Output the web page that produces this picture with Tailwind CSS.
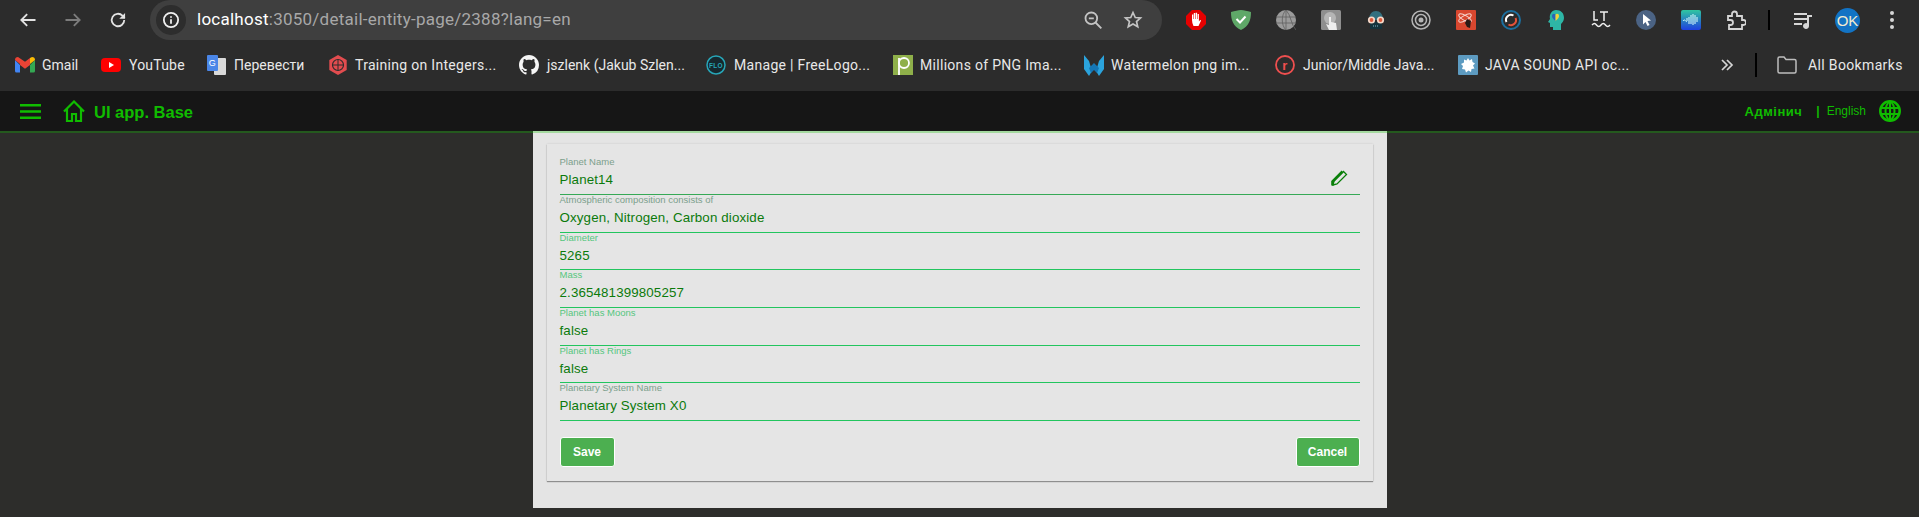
<!DOCTYPE html>
<html lang="en">

<head>
    <meta charset="UTF-8">
    <meta name="viewport" content="width=device-width, initial-scale=1.0">
    <title>Planet detail</title>
    <script src="https://cdn.jsdelivr.net/npm/@tailwindcss/browser@4"></script>
</head>

<body class="bg-[#2d2d2b] h-[517px] overflow-hidden font-['Liberation_Sans',sans-serif]">

    <!-- Browser toolbar -->
    <div class="bg-[#2c2c2c] h-[40px] flex items-center font-['Roboto',sans-serif]">
        <div class="flex w-[150px] pl-[5px]">
            <div class="w-[45px] flex justify-center">
                <svg class="w-[20px] h-[20px]" viewBox="0 0 24 24" fill="none" stroke="#e3e3e3" stroke-width="2.2"><path d="M21 12H4M11 5l-7 7 7 7" /></svg>
            </div>
            <div class="w-[45px] flex justify-center">
                <svg class="w-[20px] h-[20px]" viewBox="0 0 24 24" fill="none" stroke="#7c7c7c" stroke-width="2.2"><path d="M3 12h17M13 5l7 7-7 7" /></svg>
            </div>
            <div class="w-[45px] flex justify-center">
                <svg class="w-[20px] h-[20px]" viewBox="0 0 24 24" fill="none" stroke="#e3e3e3" stroke-width="2.2"><path d="M19.5 12a7.5 7.5 0 1 1-2.2-5.3L20 9.5" /><path d="M20.5 3.5v7h-7" fill="#e3e3e3" stroke="none" /></svg>
            </div>
        </div>
        <div class="w-[1012px] h-[40px] bg-[#3f3f3f] rounded-l-[20px] rounded-r-[20px] flex items-center relative -mt-px">
            <div class="w-[30px] h-[30px] ml-[6px] rounded-full bg-[#2d2d2d] flex items-center justify-center">
                <svg class="w-[18px] h-[18px]" viewBox="0 0 24 24" fill="none" stroke="#f0f0f0" stroke-width="2.4"><circle cx="12" cy="12" r="9.5" /><path d="M12 11v6M12 7v2" /></svg>
            </div>
            <div class="ml-[11px] text-[17px] text-[#a8a8a8] whitespace-nowrap tracking-[0.25px]"><span class="text-white">localhost</span>:3050/detail-entity-page/2388?lang=en</div>
            <div class="ml-auto flex items-center gap-[20px] pr-[19px]">
                <svg class="w-[20px] h-[20px]" viewBox="0 0 24 24" fill="none" stroke="#c4c4c4" stroke-width="2.2"><circle cx="10" cy="10" r="7" /><path d="M15 15l7 7M7 10h6" /></svg>
                <svg class="w-[20px] h-[20px]" viewBox="0 0 24 24" fill="none" stroke="#c4c4c4" stroke-width="2"><path d="M12 3l2.7 6 6.3.6-4.8 4.2 1.500 6.4L12 16.8l-5.7 3.4 1.500-6.4L3 9.6 9.3 9z" /></svg>
            </div>
        </div>
        <div class="flex ml-[11px]">
            <div class="w-[45px] flex justify-center">
                <svg class="w-[20px] h-[20px]" viewBox="0 0 20 20"><path d="M6 0h8l6 6v8l-6 6H6l-6-6V6z" fill="#e60000" /><path d="M6 8V4.5h1.3V9h.5V3h1.4v6h.5V2.8h1.4V9h.5V4h1.3v7.5l1.2-1.5 1 .6-2.6 5.4H7.5C6.500 14 6 12 6 10z" fill="#fff" /></svg>
            </div>
            <div class="w-[45px] flex justify-center">
                <svg class="w-[20px] h-[20px]" viewBox="0 0 20 20"><path d="M10 0c3 0 6 1 10 2 0 8-2 14-10 18C2 16 0 10 0 2c4-1 7-2 10-2z" fill="#5fa868" /><path d="M5.500 9l3.500 3.500 5.500-6" fill="none" stroke="#fff" stroke-width="2" /></svg>
            </div>
            <div class="w-[45px] flex justify-center">
                <svg class="w-[20px] h-[20px]" viewBox="0 0 20 20" fill="none"><circle cx="10" cy="10" r="10" fill="#9b9b9b" /><path d="M0 7h20M0 13h20M10 0v20M10 0C5 5 5 15 10 20M10 0c5 5 5 15 10 20" stroke="#5f5f5f" stroke-width=".8" /></svg>
            </div>
            <div class="w-[45px] flex justify-center">
                <svg class="w-[20px] h-[20px]" viewBox="0 0 20 20"><rect width="20" height="20" rx="1.500" fill="#8f8f8f" /><circle cx="9" cy="8" r="6" fill="#b5b5b5" /><path d="M8 7h2v5l5 1 1 7H8l-3-6 3 1z" fill="#eee" /></svg>
            </div>
            <div class="w-[45px] flex justify-center">
                <svg class="w-[20px] h-[20px]" viewBox="0 0 20 20"><path d="M3 10C3 4 6 1 10 1s7 3 7 9z" fill="#33707f" /><path d="M4 12h12v7H4z" fill="#14333c" /><path d="M7 16h6" stroke="#5f8f9c" stroke-width="1.500" stroke-dasharray="1 1" /><circle cx="5.500" cy="10" r="3.600" fill="#f5d9c9" /><circle cx="14.500" cy="10" r="3.600" fill="#f5d9c9" /><circle cx="5.500" cy="10" r="1.900" fill="#dc5a3c" /><circle cx="14.500" cy="10" r="1.900" fill="#dc5a3c" /></svg>
            </div>
            <div class="w-[45px] flex justify-center">
                <svg class="w-[20px] h-[20px]" viewBox="0 0 20 20" fill="none" stroke="#b5b5b5"><circle cx="10" cy="10" r="9" stroke-width="1.500" /><circle cx="10" cy="10" r="5.500" stroke-width="1.500" /><circle cx="10" cy="10" r="2.500" fill="#b5b5b5" stroke="none" /></svg>
            </div>
            <div class="w-[45px] flex justify-center">
                <svg class="w-[20px] h-[20px]" viewBox="0 0 20 20"><rect width="20" height="20" rx="1" fill="#d9472f" /><g fill="none" stroke="#f6d6cf" stroke-width="1"><ellipse cx="9" cy="8" rx="7" ry="2.500" transform="rotate(30 9 8)" /><ellipse cx="9" cy="8" rx="7" ry="2.500" transform="rotate(-30 9 8)" /></g><path d="M11 9l4 2-1 7-3-1-2-4z" fill="#2a1a16" /></svg>
            </div>
            <div class="w-[45px] flex justify-center">
                <svg class="w-[20px] h-[20px]" viewBox="0 0 20 20" fill="none"><circle cx="10" cy="10" r="9" stroke="#1c6f9f" stroke-width="2" /><path d="M5.500 12a5 5 0 0 1 7-6.500" stroke="#fff" stroke-width="2" /><path d="M14.500 8a5 5 0 0 1-7 6.500" stroke="#e5533b" stroke-width="2" /></svg>
            </div>
            <div class="w-[45px] flex justify-center">
                <svg class="w-[20px] h-[20px]" viewBox="0 0 20 20"><path d="M10 0c5 0 8 3 8 8 0 3-2 5-3 6v6H7v-3H4v-4l-2-1 2-3C3 4 6 0 10 0z" fill="#2eb6a6" /><path d="M9.500 11C7 9 6 7.500 6 6c0-2 2-3 3.500-1.500z" fill="#2d62b8" /><path d="M9.500 11c2.500-2 3.500-3.500 3.500-5 0-2-2-3-3.500-1.500z" fill="#f2d33d" /></svg>
            </div>
            <div class="w-[45px] flex justify-center">
                <svg class="w-[20px] h-[20px]" viewBox="0 0 20 20" fill="none" stroke="#f0f0f0" stroke-width="1.500"><path d="M3 1v9h4M9 2h8M13 2v9" /><path d="M1 15c2-2 3-2 4.500 0s3 2 4.500 0 3-2 4.500 0 3 2 4.500 0" /></svg>
            </div>
            <div class="w-[45px] flex justify-center">
                <svg class="w-[20px] h-[20px]" viewBox="0 0 20 20"><circle cx="10" cy="10" r="10" fill="#4b6384" /><path d="M7 4l8 6.500-3.500.5 2 4-2 1-2-4L7 14.500z" fill="#fff" /></svg>
            </div>
            <div class="w-[45px] flex justify-center">
                <svg class="w-[20px] h-[20px]" viewBox="0 0 20 20"><defs><linearGradient id="wave" x1="0" y1="0" x2="0" y2="1"><stop offset="0" stop-color="#2fc6a0" /><stop offset="1" stop-color="#1f3fe0" /></linearGradient></defs><rect width="20" height="20" rx="2" fill="url(#wave)" /><path d="M2 11c2-3 3 2 4 0V8m2-1v7m2-9v9m2-10v11m2-10v9m2-7v5" fill="none" stroke="#dff" stroke-width="1" /></svg>
            </div>
            <div class="w-[45px] flex justify-center">
                <svg class="w-[20px] h-[20px]" viewBox="0 0 20 20" fill="none" stroke="#d6d6d6" stroke-width="1.800"><path d="M2 6h4V4a2.500 2.500 0 0 1 5 0v2h5v4h1.500a2.500 2.500 0 0 1 0 5H16v4H3v-4h1.500a2.500 2.500 0 0 0 0-5H2z" /></svg>
            </div>
        </div>
        <div class="w-[2px] h-[20px] bg-black ml-[10px]"></div>
        <div class="w-[21px]"></div>
        <svg class="w-[20px] h-[20px] ml-[2px]" viewBox="0 0 20 20" fill="#d6d6d6"><path d="M1 3h13v2H1zM1 8h13v2H1zM1 13h8v2H1z" /><path d="M14 5h5v2h-3v9a3 3 0 1 1-2-2.800z" /></svg>
        <div class="w-[25px] h-[25px] rounded-full bg-[#1273c4] ml-[22px] flex items-center justify-center">
            <svg class="w-[25px] h-[25px]" viewBox="0 0 25 25"><text x="12.5" y="18" text-anchor="middle" font-size="15" fill="#f3ecd0" font-family="Liberation Sans">OK</text></svg>
        </div>
        <div class="flex flex-col gap-[3px] ml-[30px]">
            <span class="w-[4px] h-[4px] rounded-full bg-[#d6d6d6]"></span>
            <span class="w-[4px] h-[4px] rounded-full bg-[#d6d6d6]"></span>
            <span class="w-[4px] h-[4px] rounded-full bg-[#d6d6d6]"></span>
        </div>
    </div>

    <!-- Bookmarks -->
    <div class="bg-[#2c2c2c] h-[51px] pb-[1px] flex items-center pl-[15px] text-[14px] tracking-[0.3px] text-[#e8e8e8] font-['Roboto',sans-serif] whitespace-nowrap">
        <svg class="w-[20px] h-[16px] shrink-0" viewBox="0 0 20 16"><path d="M0 3v11a1.500 1.500 0 0 0 1.500 1.500H5V8z" fill="#4285f4" /><path d="M20 3v11a1.500 1.500 0 0 1-1.500 1.500H15V8z" fill="#34a853" /><path d="M0 3l5 4V14 8l5 3.800L15 8v-.5V1l-5 3.800L3 0C1 0 0 1 0 3z" fill="#ea4335" /><path d="M15 1l2-1c2 0 3 1 3 3l-5 4z" fill="#fbbc04" /></svg>
        <span class="ml-[7px] w-[38px] tracking-normal">Gmail</span>
        <svg class="w-[20px] h-[14px] ml-[21px] shrink-0" viewBox="0 0 20 14"><rect width="20" height="14" rx="4" fill="#f00" /><path d="M8 4l5 3-5 3z" fill="#fff" /></svg>
        <span class="ml-[8px] w-[57px] tracking-[0.2px]">YouTube</span>
        <svg class="w-[19px] h-[20px] ml-[21px] shrink-0" viewBox="0 0 19 20"><rect x="7" y="3" width="12" height="17" rx="1" fill="#d9d9d9" /><rect width="11" height="16" rx="1" fill="#4a86e8" /><text x="5.500" y="11" font-size="9" fill="#fff" text-anchor="middle" font-family="Liberation Sans">G</text></svg>
        <span class="ml-[8px] w-[72px] tracking-normal">Перевести</span>
        <svg class="w-[20px] h-[20px] ml-[22px] shrink-0" viewBox="0 0 20 20"><path d="M10 0l8.700 5v10L10 20l-8.700-5V5z" fill="#e24c4f" /><circle cx="10" cy="10" r="5.500" fill="none" stroke="#2c2c2c" stroke-width="1.200" /><path d="M10 4.500v11M4.500 10h11" stroke="#2c2c2c" stroke-width="1" /></svg>
        <span class="ml-[7px] w-[142px]">Training on Integers...</span>
        <svg class="w-[20px] h-[20px] ml-[22px] shrink-0" viewBox="0 0 16 16" fill="#f5f5f5"><path d="M8 0C3.580 0 0 3.580 0 8c0 3.540 2.290 6.530 5.470 7.590.4.07.55-.17.55-.38 0-.19-.01-.82-.01-1.490-2.010.37-2.530-.49-2.690-.94-.09-.23-.48-.94-.82-1.130-.28-.15-.68-.52-.01-.53.63-.01 1.080.58 1.230.82.72 1.210 1.870.87 2.330.66.07-.52.28-.87.51-1.070-1.780-.2-3.640-.89-3.640-3.950 0-.87.31-1.590.82-2.150-.08-.2-.36-1.020.08-2.120 0 0 .67-.21 2.200.82.64-.18 1.320-.27 2-.27.68 0 1.360.09 2 .27 1.530-1.040 2.200-.82 2.200-.82.44 1.100.16 1.920.08 2.120.51.56.82 1.270.82 2.150 0 3.070-1.870 3.750-3.650 3.950.29.25.54.73.54 1.480 0 1.070-.01 1.930-.01 2.200 0 .21.15.46.55.38A8.013 8.013 0 0 0 16 8c0-4.420-3.580-8-8-8z" /></svg>
        <span class="ml-[8px] w-[139px] tracking-normal">jszlenk (Jakub Szlen...</span>
        <svg class="w-[20px] h-[20px] ml-[20px] shrink-0" viewBox="0 0 20 20"><circle cx="10" cy="10" r="9" fill="#16282e" stroke="#27a6b8" stroke-width="1.500" /><text x="10" y="12.500" font-size="6.500" font-weight="700" fill="#27a6b8" text-anchor="middle" font-family="Liberation Sans">FLO</text></svg>
        <span class="ml-[8px] w-[138px]">Manage | FreeLogo...</span>
        <svg class="w-[20px] h-[20px] ml-[21px] shrink-0" viewBox="0 0 20 20"><rect width="20" height="20" fill="#8fb04a" /><circle cx="11" cy="8" r="5" fill="none" stroke="#fff" stroke-width="1.800" /><path d="M6 3v17" stroke="#fff" stroke-width="1.800" /></svg>
        <span class="ml-[7px] w-[143px]">Millions of PNG Ima...</span>
        <svg class="w-[20px] h-[24px] ml-[21px] shrink-0" viewBox="0 0 20 24"><path d="M0 2l5 6 3 10-3 5-5-7z" fill="#2ba3dc" /><path d="M20 2l-5 6-3 10 3 5 5-7z" fill="#2ba3dc" /><path d="M5 15l5-5 5 5-2 5-3-3-3 3z" fill="#1476b5" /></svg>
        <span class="ml-[7px] w-[142px]">Watermelon png im...</span>
        <svg class="w-[20px] h-[20px] ml-[22px] shrink-0" viewBox="0 0 20 20"><circle cx="10" cy="10" r="9" fill="none" stroke="#ef4f4f" stroke-width="1.800" /><text x="10" y="14.500" font-size="13" font-weight="700" fill="#ef4f4f" text-anchor="middle" font-family="Liberation Sans">r</text></svg>
        <span class="ml-[8px] w-[134px] tracking-normal">Junior/Middle Java...</span>
        <svg class="w-[20px] h-[20px] ml-[21px] shrink-0" viewBox="0 0 20 20"><rect width="20" height="20" rx="1" fill="#5d9bc1" /><path d="M10 3l1.500 2.500L14 4l.5 3 2.500 1.500L15 10.500l1.500 3-3 .5-.5 3-2.500-1.500L8 17.500 7 14.500 4 14l1-3-2-2 3-1.500L6 4.500l2.500 1z" fill="#fff" /></svg>
        <span class="ml-[7px] w-[144px]">JAVA SOUND API oc...</span>
        <svg class="w-[14px] h-[14px] ml-[91px] shrink-0" viewBox="0 0 14 14" fill="none" stroke="#d6d6d6" stroke-width="1.700"><path d="M2 2l5 5-5 5M7 2l5 5-5 5" /></svg>
        <div class="w-[2px] h-[24px] bg-black ml-[21px]"></div>
        <svg class="w-[20px] h-[18px] ml-[20px] shrink-0" viewBox="0 0 20 18" fill="none" stroke="#bdbdbd" stroke-width="1.500"><path d="M1 2.500a1.500 1.500 0 0 1 1.500-1.500H7l2 2.500h8.500A1.500 1.500 0 0 1 19 5v10.500a1.500 1.500 0 0 1-1.500 1.500h-15A1.500 1.500 0 0 1 1 15.500z" /></svg>
        <span class="ml-[11px] tracking-[0.35px]">All Bookmarks</span>
    </div>

    <!-- App bar -->
    <div class="bg-[#161616] h-[40px] flex items-center pl-[20px] pr-[18px] relative z-10 text-[#10bc00]">
        <svg class="w-[21px] h-[15px]" viewBox="0 0 21 15" fill="#10bc00"><path d="M0 0h21v2.500H0zM0 6.250h21v2.500H0zM0 12.500h21V15H0z" /></svg>
        <svg class="w-[22px] h-[22px] ml-[22px]" viewBox="0 0 22 22" fill="none" stroke="#10bc00" stroke-width="2.200"><path d="M1 11.500L11 1.500l10 10M4 9v12h5v-7h4v7h5V9" /></svg>
        <span class="ml-[9px] text-[16.5px] font-bold mt-[2px]">UI app. Base</span>
        <span class="ml-auto text-[13px] tracking-[0.5px] font-bold mt-[1px]">Адмінич</span>
        <span class="ml-[14px] text-[12px] font-bold">|</span>
        <span class="ml-[7px] text-[12px]">English</span>
        <svg class="w-[22px] h-[22px] ml-[13px]" viewBox="0 0 22 22" fill="none" stroke="#10bc00" stroke-width="2.600"><circle cx="11" cy="11" r="9.700" /><path d="M1 8h20M1 14h20M11 1v20M11 1c-6 5-6 15 0 20M11 1c6 5 6 15 0 20" stroke-width="2" /></svg>
        <div class="absolute left-0 right-0 top-[40px] h-[2px] bg-[#10c000]/30"></div>
    </div>

    <!-- Panel -->
    <main class="flex justify-center">
        <div class="w-[854px] h-[377px] bg-[#e4e4e4] pt-[13px] px-[14px]">
            <div class="h-[337px] bg-[#e5e5e5] shadow-[0_1px_1px_rgba(0,0,0,0.35),0_0_2px_rgba(0,0,0,0.12)] pt-[13.33px] px-[13px]">
                <div class="relative h-[37.67px] border-b border-[#36a956] flex flex-col">
                    <label class="text-[9.5px] leading-[10px] text-[#7c9f8c]">Planet Name</label>
                    <div class="text-[13.33px] leading-[18px] mt-[4px] tracking-[0.13px] text-[#0b7a0b]">Planet14</div>
                    <svg class="absolute right-[12px] top-[13px] w-[17px] h-[17px]" viewBox="0 0 17 17" fill="none" stroke="#0a800a"><path d="M12.500 1.500l3 3-9.500 9.500-4 1 1-4z" stroke-width="1.300" /><path d="M11.500 1.500L1.500 11.500v4" stroke-width="2.600" /></svg>
                </div>
                <div class="h-[37.67px] border-b border-[#22c55e] flex flex-col">
                    <label class="text-[9.5px] leading-[10px] text-[#7c9f8c]">Atmospheric composition consists of</label>
                    <div class="text-[13.33px] leading-[18px] mt-[4px] tracking-[0.13px] text-[#0b7a0b]">Oxygen, Nitrogen, Carbon dioxide</div>
                </div>
                <div class="h-[37.67px] border-b border-[#22c55e] flex flex-col">
                    <label class="text-[9.5px] leading-[10px] text-[#55c57e]">Diameter</label>
                    <div class="text-[13.33px] leading-[18px] mt-[4px] tracking-[0.13px] text-[#0b7a0b]">5265</div>
                </div>
                <div class="h-[37.67px] border-b border-[#22c55e] flex flex-col">
                    <label class="text-[9.5px] leading-[10px] text-[#55c57e]">Mass</label>
                    <div class="text-[13.33px] leading-[18px] mt-[4px] tracking-[0.13px] text-[#0b7a0b]">2.365481399805257</div>
                </div>
                <div class="h-[37.67px] border-b border-[#22c55e] flex flex-col">
                    <label class="text-[9.5px] leading-[10px] text-[#55c57e]">Planet has Moons</label>
                    <div class="text-[13.33px] leading-[18px] mt-[4px] tracking-[0.13px] text-[#0b7a0b]">false</div>
                </div>
                <div class="h-[37.67px] border-b border-[#22c55e] flex flex-col">
                    <label class="text-[9.5px] leading-[10px] text-[#55c57e]">Planet has Rings</label>
                    <div class="text-[13.33px] leading-[18px] mt-[4px] tracking-[0.13px] text-[#0b7a0b]">false</div>
                </div>
                <div class="h-[37.67px] border-b border-[#22c55e] flex flex-col">
                    <label class="text-[9.5px] leading-[10px] text-[#7c9f8c]">Planetary System Name</label>
                    <div class="text-[13.33px] leading-[18px] mt-[4px] tracking-[0.13px] text-[#0b7a0b]">Planetary System X0</div>
                </div>
                <div class="flex justify-between mt-[16px]">
                    <button class="w-[55px] h-[30px] bg-[#4caf50] border border-white rounded-[3px] text-white text-[12px] font-bold">Save</button>
                    <button class="w-[64px] h-[30px] bg-[#4caf50] border border-white rounded-[3px] text-white text-[12px] font-bold">Cancel</button>
                </div>
            </div>
        </div>
    </main>
</body>

</html>
